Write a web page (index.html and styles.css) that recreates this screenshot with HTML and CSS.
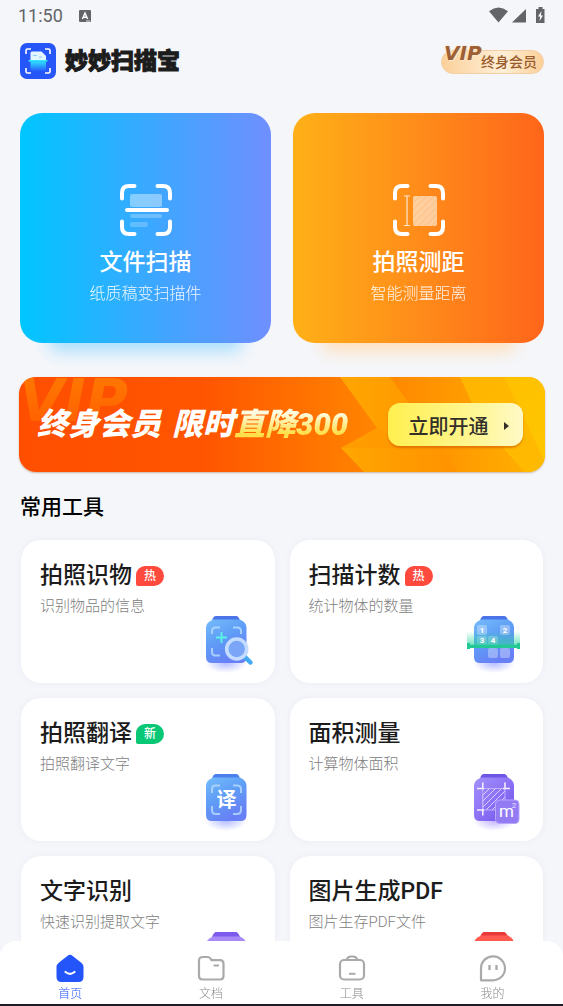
FILE: index.html
```html
<!DOCTYPE html>
<html lang="zh-CN">
<head>
  <meta charset="UTF-8">
  <meta name="viewport" content="width=device-width, initial-scale=1.0">
  <title>妙妙扫描宝</title>
  <link rel="stylesheet" href="styles.css">
</head>
<body>
  <!-- shared gradients for the icons -->
  <svg class="defs" width="0" height="0" aria-hidden="true">
    <defs>
      <linearGradient id="blue" x1="0" y1="0" x2="0.5" y2="1">
        <stop offset="0" stop-color="#74bcfb"/><stop offset="0.5" stop-color="#5f9df6"/><stop offset="1" stop-color="#6880f5"/>
      </linearGradient>
      <linearGradient id="purple" x1="0" y1="0" x2="1" y2="1">
        <stop offset="0" stop-color="#a391fb"/><stop offset="0.5" stop-color="#8d72f5"/><stop offset="1" stop-color="#6c50ea"/>
      </linearGradient>
      <linearGradient id="green" x1="0" y1="1" x2="0" y2="0">
        <stop offset="0" stop-color="#2bd6a0" stop-opacity="0.7"/><stop offset="1" stop-color="#2bd6a0" stop-opacity="0"/>
      </linearGradient>
      <linearGradient id="beam" x1="0" y1="0" x2="0" y2="1">
        <stop offset="0" stop-color="#2ee0ff"/><stop offset="1" stop-color="#2ee0ff" stop-opacity="0"/>
      </linearGradient>
      <linearGradient id="shade" x1="0" y1="0" x2="1" y2="0">
        <stop offset="0" stop-color="#ffa600"/><stop offset="1" stop-color="#ff9200"/>
      </linearGradient>
      <linearGradient id="gold" x1="0" y1="0" x2="1" y2="1">
        <stop offset="0" stop-color="#ffbd00"/><stop offset="1" stop-color="#ffc700"/>
      </linearGradient>
      <radialGradient id="glowBlue">
        <stop offset="0" stop-color="#5b6cff" stop-opacity="0.45"/><stop offset="1" stop-color="#5b6cff" stop-opacity="0"/>
      </radialGradient>
      <radialGradient id="glowPurple">
        <stop offset="0" stop-color="#7d5cff" stop-opacity="0.45"/><stop offset="1" stop-color="#7d5cff" stop-opacity="0"/>
      </radialGradient>
    </defs>
  </svg>

  <div class="status">
    <span class="time">11:50</span>
    <svg class="status-app" viewBox="0 0 12 12" width="12" height="12">
      <rect width="12" height="12" rx="1" fill="#626468"/>
      <path d="M3.4 9 6 3l2.6 6M4.3 7.2h3.4" fill="none" stroke="#fff" stroke-width="1.4"/>
      <path d="M7 11h4" stroke="#fff" stroke-width="0.8"/>
    </svg>
    <svg class="status-icons" viewBox="0 0 56 18" width="56" height="18">
      <path d="M0 4.2Q9.500-3 19 4.200L9.500 15.600Z" fill="#626468"/>
      <path d="M37 2v13.500H23Z" fill="#626468"/>
      <path d="M49.500 0h4v2h2v14h-8.500V2h2.500Z" fill="#626468"/>
      <path d="M52.500 4 49 9.500h2.200L50.500 14l3.500-5.600h-2.200Z" fill="#fff"/>
    </svg>
  </div>

  <header class="header">
    <svg class="logo" viewBox="0 0 36 36" width="36" height="36">
      <rect width="36" height="36" rx="7" fill="#2656f8"/>
      <path d="M6 11V7.500Q6 6 7.500 6H11M25 6h3.500Q30 6 30 7.500V11M30 25v3.500Q30 30 28.500 30H25M11 30H7.500Q6 30 6 28.500V25" fill="none" stroke="#fff" stroke-width="1.600"/>
      <path d="M10.500 17V10q0-1.500 1.500-1.500h9.500l4.500 4.500v4Z" fill="#e4f6ff"/>
      <path d="M13 12.500h4M19 14h3" stroke="#8ecbff" stroke-width="1.200"/>
      <path d="M10.500 18.500h15.500v8q0 2-2 2h-11.500q-2 0-2-2Z" fill="url(#beam)"/>
      <path d="M8.500 17.800h19" stroke="#32eaff" stroke-width="1.600"/>
    </svg>
    <h1>妙妙扫描宝</h1>
    <a href="#" class="vip-badge"><span class="vip-mark">VIP</span>终身会员</a>
  </header>

  <main>
    <div class="heroes">
      <a href="#" class="hero hero-scan">
        <svg viewBox="0 0 54 54" width="54" height="54">
          <path d="M3 15.500V10Q3 3 10 3h5.500M38.500 3H44q7 0 7 7v5.500M51 38.500V44q0 7-7 7h-5.500M15.500 51H10q-7 0-7-7v-5.500" fill="none" stroke="#fff" stroke-width="4" stroke-linecap="round"/>
          <rect x="11" y="11" width="32" height="13" rx="2" fill="#fff" opacity="0.4"/>
          <rect x="11" y="31" width="32" height="4" rx="2" fill="#fff" opacity="0.26"/>
          <rect x="11" y="39" width="18" height="5" rx="2" fill="#fff" opacity="0.22"/>
          <path d="M8 27h40" stroke="#fff" stroke-width="4" stroke-linecap="round"/>
        </svg>
        <h2>文件扫描</h2>
        <p>纸质稿变扫描件</p>
      </a>
      <a href="#" class="hero hero-measure">
        <svg viewBox="0 0 54 54" width="54" height="54">
          <path d="M3 15.500V10Q3 3 10 3h5.500M38.500 3H44q7 0 7 7v5.500M51 38.500V44q0 7-7 7h-5.500M15.500 51H10q-7 0-7-7v-5.500" fill="none" stroke="#fff" stroke-width="4" stroke-linecap="round"/>
          <path d="M12 13h6M12 42.500h6M15 13v29.500" stroke="#fff" stroke-width="1.200" opacity="0.8"/>
          <rect x="21" y="13" width="24" height="30" rx="2" fill="#fff" opacity="0.58"/>
          <path d="M21 20l7-7M21 27l14-14M21 34l21-21M21 41l24-24M26 43l19-19M33 43l12-12M40 43l5-5" stroke="#ff9a3c" stroke-width="1" opacity="0.3"/>
        </svg>
        <h2>拍照测距</h2>
        <p>智能测量距离</p>
      </a>
    </div>

    <section class="banner">
      <svg class="banner-bg" viewBox="0 0 526 95" preserveAspectRatio="none" aria-hidden="true">
        <path d="M321 0h50l68 95h-94l-23-24 36-20Z" fill="url(#shade)"/>
        <path d="M321 71 358 51l36 20Z" fill="#ff8d00" opacity="0.3"/>
        <path d="M441 0h85v95h-20l-44-50Z" fill="url(#gold)"/>
        <path d="M485 0 526 85v10h-20L459 37 441 0Z" fill="#ffad00" opacity="0.5"/>
      </svg>
      <span class="banner-mark" aria-hidden="true">VIP</span>
      <p class="banner-text"><span>终身会员</span> <span>限时<span class="off">直降300</span></span></p>
      <button class="open-btn">立即开通
        <svg viewBox="0 0 5 8" width="5" height="8"><path d="M0 0 5 4 0 8Z" fill="#33302a"/></svg>
      </button>
    </section>

    <h2 class="section-title">常用工具</h2>

    <div class="tools">
      <a href="#" class="tool">
        <h3>拍照识物<span class="tag">热</span></h3>
        <p>识别物品的信息</p>
        <svg class="tool-icon" viewBox="0 0 64 64" width="64" height="64">
          <ellipse cx="28" cy="51" rx="21" ry="10" fill="url(#glowBlue)"/>
          <path d="M14 9q1-5 4-5h20q3 0 4 5Z" fill="#4b74e8"/>
          <path d="M15 7.500h27q6.500 3 6.500 8V45q0 6-6 6h-28.500q-6 0-6-6V15.500q0-5 7-8Z" fill="url(#blue)"/>
          <path d="M14 22v-3q0-3.500 3.500-3.500H22M35 15.500h4q4 0 4 3.500v3M22 43.500h-4.500Q14 43.500 14 40v-4" fill="none" stroke="#b9dcff" stroke-width="2" opacity="0.8"/>
          <path d="M23.500 20v11M18 25.500h11" stroke="#5cf5e8" stroke-width="1.800"/>
          <path d="m47 45 5.500 5.500" stroke="#41aaf3" stroke-width="4.500" stroke-linecap="round"/>
          <circle cx="38.700" cy="37" r="10" fill="#7ba6f8" stroke="#c3dcff" stroke-width="3.600"/>
        </svg>
      </a>
      <a href="#" class="tool">
        <h3>扫描计数<span class="tag">热</span></h3>
        <p>统计物体的数量</p>
        <svg class="tool-icon" viewBox="0 0 64 64" width="64" height="64">
          <ellipse cx="28" cy="51" rx="21" ry="10" fill="url(#glowBlue)"/>
          <path d="M14 9q1-5 4-5h20q3 0 4 5Z" fill="#4b74e8"/>
          <path d="M15 7.500h27q6 3 6 8V45q0 6-6 6h-28q-6 0-6-6V15.500q0-5 7-8Z" fill="url(#blue)"/>
          <g fill="#fff" opacity="0.32">
            <rect x="11" y="13" width="10" height="10" rx="2"/>
            <rect x="34" y="13" width="10" height="10" rx="2"/>
            <rect x="11" y="24" width="10" height="10" rx="2"/>
            <rect x="22" y="24" width="10" height="10" rx="2"/>
            <rect x="22" y="36" width="10" height="10" rx="2"/>
            <rect x="34" y="36" width="10" height="10" rx="2"/>
          </g>
          <rect x="1" y="19" width="53" height="15" fill="url(#green)"/>
          <g class="count-num">
            <text x="16" y="21">1</text>
            <text x="39" y="21">2</text>
            <text x="16" y="31">3</text>
            <text x="27" y="31">4</text>
          </g>
          <path d="M1 31h3v1.800h47V31h3v6h-3v-1H4v1H1Z" fill="#22c994"/>
        </svg>
      </a>
      <a href="#" class="tool">
        <h3>拍照翻译<span class="tag tag-new">新</span></h3>
        <p>拍照翻译文字</p>
        <svg class="tool-icon" viewBox="0 0 64 64" width="64" height="64">
          <ellipse cx="28" cy="51" rx="21" ry="10" fill="url(#glowBlue)"/>
          <path d="M14 9q1-5 4-5h20q3 0 4 5Z" fill="#4b80ec"/>
          <path d="M15 7.500h27q6.500 3 6.500 8V45q0 6-6 6h-28.500q-6 0-6-6V15.500q0-5 7-8Z" fill="url(#blue)"/>
          <path d="M14 23v-4q0-3.500 3.500-3.500H22M35 15.500h4q4 0 4 3.500v4M43 36v4q0 4-4 4h-4M22 44h-4.500Q14 44 14 40v-4" fill="none" stroke="#b9dcff" stroke-width="2" opacity="0.8"/>
          <text class="yi" x="28.500" y="37">译</text>
        </svg>
      </a>
      <a href="#" class="tool">
        <h3>面积测量</h3>
        <p>计算物体面积</p>
        <svg class="tool-icon" viewBox="0 0 64 64" width="64" height="64">
          <ellipse cx="28" cy="51" rx="21" ry="10" fill="url(#glowPurple)"/>
          <path d="M14 9q1-5 4-5h20q3 0 4 5Z" fill="#6f55e6"/>
          <path d="M15 7.500h27q6 3 6 8V45q0 6-6 6h-28q-6 0-6-6V15.500q0-5 7-8Z" fill="url(#purple)"/>
          <path d="M17 25l7-7M17 31l13-13M17 37l19-19M20 40l19-19M26 40l13-13" stroke="#d9d0ff" stroke-width="1"/>
          <path d="M16.800 24v16H32M39 32V18.500H16.800V40" fill="none" stroke="#c9bdff" stroke-width="0.800"/>
          <path d="M11 18.500h7M37 18.500h7M11 40h7M16.800 12.500v7M39 12.500v7M16.800 39v6.500" stroke="#f1edff" stroke-width="1.600"/>
          <rect x="29.500" y="30" width="23.500" height="23.500" rx="4" fill="#937bf3" stroke="#b8a8ff"/>
          <text class="area-m" x="40.500" y="47">m</text>
          <text class="area-2" x="48" y="38">2</text>
        </svg>
      </a>
      <a href="#" class="tool">
        <h3>文字识别</h3>
        <p>快速识别提取文字</p>
        <svg class="tool-icon" viewBox="0 0 64 64" width="64" height="64">
          <path d="M14 9q2-5 4-5h20q2 0 4 5Z" fill="#7e5bef"/>
          <path d="M15 8.500h27q6.500 3 6.500 8V45q0 6-6 6h-28.500q-6 0-6-6V16.500q0-5 7-8Z" fill="#a78af8"/>
        </svg>
      </a>
      <a href="#" class="tool">
        <h3>图片生成PDF</h3>
        <p>图片生存PDF文件</p>
        <svg class="tool-icon" viewBox="0 0 64 64" width="64" height="64">
          <path d="M14 9q2-5 4-5h20q2 0 4 5Z" fill="#e93a3a"/>
          <path d="M15 7.500h27q6 3 6 8V45q0 6-6 6h-28q-6 0-6-6V15.500q0-5 7-8Z" fill="#ff5a50"/>
        </svg>
      </a>
    </div>
  </main>

  <nav class="tabbar">
    <a href="#" class="tab active">
      <svg viewBox="0 0 28 28" width="28" height="28">
        <path d="M14 .8q1.200 0 3 1.400l8 6.300q2.500 2 2.500 4.500v10q0 5-5 5h-17q-5 0-5-5V13q0-2.500 2.500-4.500l8-6.300q1.800-1.400 3-1.400Z" fill="#2455fb"/>
        <path d="M9.500 18q4.500 3.600 9 0" fill="none" stroke="#fff" stroke-width="2.200" stroke-linecap="round"/>
      </svg>
      首页
    </a>
    <a href="#" class="tab">
      <svg viewBox="0 0 28 28" width="28" height="28">
        <path d="M6 3h4.500q2 0 3 1.500l1 1.700h8.500q3.500 0 3.500 3.500V22q0 3.500-3.500 3.500H5.500Q2 25.500 2 22V6.500Q2 3 6 3Z" fill="none" stroke="#aaa" stroke-width="2.200"/>
        <path d="M16.500 11.500H22" stroke="#aaa" stroke-width="2"/>
      </svg>
      文档
    </a>
    <a href="#" class="tab">
      <svg viewBox="0 0 28 28" width="28" height="28">
        <rect x="2" y="6" width="24" height="19.500" rx="4" fill="none" stroke="#aaa" stroke-width="2.200"/>
        <path d="M8.500 6Q9.500 2.500 13 2.500h2q3.500 0 4.500 3.500" fill="none" stroke="#aaa" stroke-width="2.200"/>
        <path d="M11 19.800h6.500" stroke="#aaa" stroke-width="2"/>
      </svg>
      工具
    </a>
    <a href="#" class="tab">
      <svg viewBox="0 0 28 28" width="28" height="28">
        <path d="M2 26.300V14A12 12 0 1 1 14 26.300Z" fill="none" stroke="#aaa" stroke-width="2.200" stroke-linejoin="round"/>
        <path d="M10.500 11v5M17.500 11v5" stroke="#aaa" stroke-width="2.400"/>
      </svg>
      我的
    </a>
  </nav>
</body>
</html>
```

FILE: styles.css
```css
*{
  box-sizing: border-box;
  margin: 0;
  padding: 0;
}
html{
  scrollbar-width: none;
}
body{
  background-color: #f5f6fa;
  color: #1c1c1c;
  font-family: Roboto, "Noto Sans CJK SC", sans-serif;
}
a{
  color: inherit;
  text-decoration: none;
}
svg{
  display: block;
  flex-shrink: 0;
}
.defs{
  position: absolute;
}

/* status bar */
.status{
  display: flex;
  align-items: center;
  height: 32px;
  padding: 0 18px;
  color: #626468;
}
.time{
  font-size: 18px;
  line-height: 32px;
}
.status-app{
  margin-left: 16px;
}
.status-icons{
  margin-left: auto;
}

/* header */
.header{
  display: flex;
  align-items: center;
  height: 57px;
  padding: 0 19px 0 20px;
}
.header h1{
  margin-left: 9px;
  font-size: 23px;
  line-height: 32px;
  font-weight: 900;
  padding-top: 2px;
  -webkit-text-stroke: 1px #1c1c1c;
}
.vip-badge{
  position: relative;
  margin: 2px 0 0 auto;
  width: 103px;
  height: 24px;
  padding-right: 6px;
  border: 1px solid #f3cfa3;
  border-radius: 12px;
  background: linear-gradient(90deg, #fbd09a, #fff0d8 60%, #fbcf98);
  color: #9a5b2c;
  font-size: 14px;
  line-height: 22px;
  font-weight: 500;
  text-align: right;
}
.vip-mark{
  position: absolute;
  left: 2px;
  top: -8px;
  color: #9c5f36;
  font: italic bold 20px/20px "DejaVu Sans", sans-serif;
  text-shadow: 0 0 2px #ffe6c4, 0 0 2px #ffe6c4, 1px 1px 1px #ffe6c4;
}

/* two big cards */
.heroes{
  display: grid;
  grid-template-columns: 1fr 1fr;
  gap: 22px;
  padding: 24px 19px 0 20px;
}
.hero{
  display: flex;
  flex-direction: column;
  align-items: center;
  height: 230px;
  padding-top: 70px;
  border-radius: 22px;
  color: white;
}
.hero-scan{
  background: linear-gradient(90deg, #00c6ff, #39a9ff 50%, #6f8fff);
  box-shadow: 0 38px 16px -30px #a5defc;
}
.hero-measure{
  background: linear-gradient(90deg, #ffb017, #ff8c1a 50%, #ff651a);
  box-shadow: 0 38px 16px -30px #ffdfba;
}
.hero h2{
  margin-top: 10px;
  font-size: 23px;
  line-height: 32px;
  font-weight: 500;
}
.hero p{
  margin-top: 3px;
  font-size: 16px;
  line-height: 24px;
  font-weight: 300;
  opacity: 0.9;
}

/* vip banner */
.banner{
  position: relative;
  display: flex;
  align-items: center;
  justify-content: space-between;
  height: 95px;
  margin: 34px 18px 0 19px;
  padding: 0 22px 0 18px;
  border-radius: 17px;
  background: linear-gradient(90deg, #ff4e00, #ff5500 35%, #ff7d00 62%, #ff9500 80%, #ffb400);
  box-shadow: 0 1px 2px rgba(120, 60, 0, 0.35);
  overflow: hidden;
}
.banner-bg{
  position: absolute;
  left: 0;
  top: 0;
  width: 100%;
  height: 100%;
}
.banner-mark{
  position: absolute;
  left: 0;
  top: 0;
  font: italic bold 58px/48px "DejaVu Sans", sans-serif;
  background: linear-gradient(180deg, #ff7300 20%, #ff6200 90%);
  -webkit-background-clip: text;
  background-clip: text;
  color: transparent;
}
.banner-text{
  position: relative;
  display: flex;
  gap: 11px;
  font-size: 31px;
  line-height: 44px;
  font-weight: 900;
  font-style: italic;
  color: white;
  white-space: nowrap;
}
.banner-text .off{
  padding-right: 4px;
  background: linear-gradient(180deg, #fffbe0 20%, #ffdf4a 75%);
  -webkit-background-clip: text;
  background-clip: text;
  color: transparent;
}
.open-btn{
  position: relative;
  display: flex;
  align-items: center;
  justify-content: center;
  gap: 15px;
  width: 135px;
  height: 43px;
  padding: 2px 0 0 6px;
  border: none;
  border-radius: 12px;
  background: linear-gradient(90deg, #ffef4f, #fff79a 70%, #fff9c8);
  box-shadow: 0 2px 2px rgba(200, 80, 0, 0.5);
  color: #33302a;
  font-family: inherit;
  font-size: 20px;
  font-weight: 500;
  cursor: pointer;
}

/* tools */
.section-title{
  margin: 19px 20px 0;
  font-size: 21px;
  line-height: 32px;
  font-weight: 500;
  color: #000;
}
.tools{
  display: grid;
  grid-template-columns: 1fr 1fr;
  gap: 15px;
  padding: 17px 20px 80px 21px;
}
.tool{
  display: flex;
  flex-direction: column;
  height: 143px;
  padding: 20px 13px 0 19px;
  border-radius: 20px;
  background-color: white;
  box-shadow: 0 0 6px rgba(120, 130, 180, 0.08);
}
.tool h3{
  display: flex;
  align-items: center;
  font-size: 23px;
  line-height: 32px;
  font-weight: 500;
}
.tool p{
  margin-top: 3px;
  font-size: 15px;
  line-height: 22px;
  font-weight: 300;
  color: #808080;
}
.tool-icon{
  align-self: flex-end;
  margin-top: -5px;
}
.tag{
  width: 28px;
  height: 20px;
  margin-left: 4px;
  border-radius: 9px 10px 10px 2px;
  background-color: #ff4a3d;
  color: white;
  font-size: 12px;
  line-height: 20px;
  font-weight: 500;
  text-align: center;
}
.tag-new{
  background-color: #08c875;
}
.count-num{
  fill: white;
  font-size: 8px;
  font-weight: bold;
  text-anchor: middle;
}
.yi{
  fill: white;
  font-size: 20px;
  font-weight: bold;
  text-anchor: middle;
}
.area-m{
  fill: white;
  font-size: 17px;
  text-anchor: middle;
}
.area-2{
  fill: #e8e2ff;
  font-size: 8px;
  text-anchor: middle;
}

/* bottom tabs */
.tabbar{
  position: fixed;
  left: 0;
  right: 0;
  bottom: 0;
  display: grid;
  grid-template-columns: repeat(4, 1fr);
  height: 65px;
  padding-top: 13px;
  border-bottom: 2px solid #1d1a26;
  border-radius: 16px 16px 0 0;
  background-color: white;
}
.tab{
  display: flex;
  flex-direction: column;
  align-items: center;
  font-size: 12px;
  line-height: 24px;
  font-weight: 300;
  color: #8c8c8c;
}
.tab.active{
  color: #2455fb;
}
```
